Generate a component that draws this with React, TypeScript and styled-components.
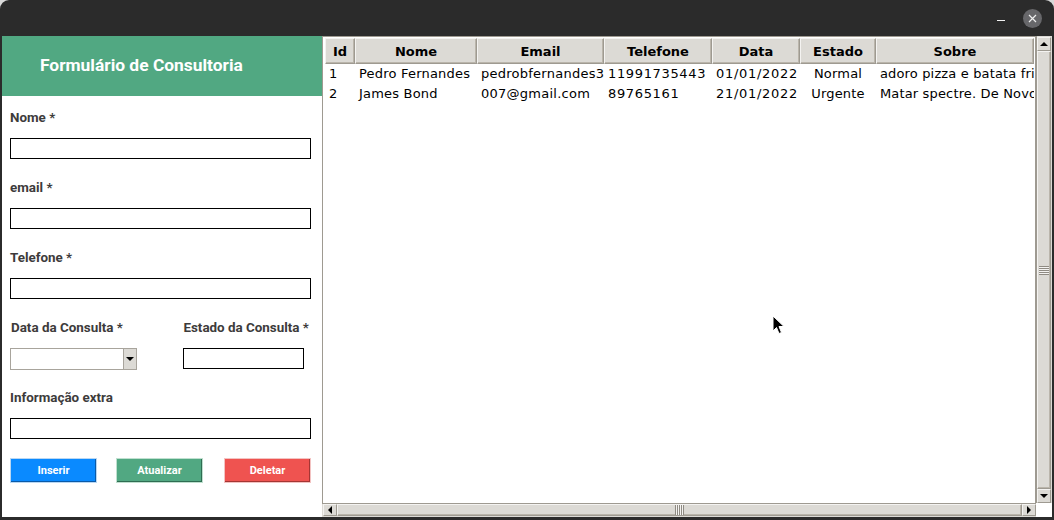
import React from 'react';
import styled, { createGlobalStyle } from 'styled-components';

const Global = createGlobalStyle`
  html, body { margin: 0; padding: 0; background: #d9d9d9; }
  body { width: 1054px; height: 520px; overflow: hidden; }
  * { box-sizing: border-box; }
`;

const Window = styled.div`
  position: relative;
  width: 1054px;
  height: 520px;
  background: #2b2b2b;
  border-radius: 9px 9px 0 0;
  display: flex;
  flex-direction: column;
  overflow: hidden;
`;

const TitleBar = styled.div`
  height: 36px;
  flex: none;
  display: flex;
  align-items: center;
  justify-content: flex-end;
  padding-right: 12px;
  gap: 18px;
`;

const MinBtn = styled.div`
  width: 8px;
  height: 1px;
  background: #f2f2f2;
  margin-top: 4px;
`;

const CloseBtn = styled.div`
  width: 19px;
  height: 19px;
  border-radius: 50%;
  background: #67676a;
  display: flex;
  align-items: center;
  justify-content: center;
`;

const Main = styled.div`
  flex: 1;
  min-height: 0;
  display: flex;
  margin: 0 2px 3px 2px;
`;

const Sidebar = styled.div`
  width: 320px;
  flex: none;
  background: #ffffff;
  display: flex;
  flex-direction: column;
`;

const SideHeader = styled.div`
  height: 60px;
  background: #51a882;
  display: flex;
  align-items: center;
  padding: 0 0 3px 38px;
  color: #ffffff;
  font-family: Roboto, "Liberation Sans", sans-serif;
  font-weight: 700;
  font-size: 17.4px;
`;

const Form = styled.div`
  display: flex;
  flex-direction: column;
  padding: 15px 0 0 6px;
  font-family: Roboto, "Liberation Sans", sans-serif;
`;

const Field = styled.div<{ $mb: number }>`
  display: flex;
  flex-direction: column;
  gap: 13px;
  margin-bottom: ${(p) => p.$mb}px;
`;

const Label = styled.div<{ $indent?: number }>`
  height: 14px;
  line-height: 14px;
  font-size: 13.4px;
  font-weight: 700;
  color: #3d3b3b;
  padding-left: ${(p) => p.$indent ?? 2}px;
  white-space: nowrap;
`;

const TextBox = styled.div<{ $w: number; $h?: number; $ml?: number }>`
  width: ${(p) => p.$w}px;
  height: ${(p) => p.$h ?? 21}px;
  margin-left: ${(p) => p.$ml ?? 2}px;
  border: 1px solid #000000;
  background: #ffffff;
`;

const TwoCols = styled.div`
  display: flex;
  margin-bottom: 21px;
`;

const Col = styled.div<{ $w: number }>`
  width: ${(p) => p.$w}px;
  display: flex;
  flex-direction: column;
  gap: 13px;
`;

const Combo = styled.div`
  width: 127px;
  height: 22px;
  margin-left: 2px;
  border: 1px solid #a8a49c;
  background: #ffffff;
  display: flex;
  justify-content: flex-end;
`;

const ComboArrow = styled.div`
  width: 13px;
  background: #dcdad5;
  border-left: 1px solid #a8a49c;
  display: flex;
  align-items: center;
  justify-content: center;
`;

const ButtonRow = styled.div`
  display: flex;
  padding-left: 2px;
`;

const Button = styled.div<{ $ml: number; $color: string; $light: string; $dark: string }>`
  width: 87px;
  height: 25px;
  margin-left: ${(p) => p.$ml}px;
  background: ${(p) => p.$color};
  border: 1px solid ${(p) => p.$light};
  box-shadow: inset -1px -1px 0 ${(p) => p.$dark};
  color: #ffffff;
  font-size: 11px;
  font-weight: 700;
  display: flex;
  align-items: center;
  justify-content: center;
`;

const TablePane = styled.div`
  flex: 1;
  min-width: 0;
  display: grid;
  grid-template-columns: 1fr 16px;
  grid-template-rows: 1fr 14px;
  background: #ffffff;
`;

const Tree = styled.div`
  border-left: 1px solid #9e9a91;
  border-top: 1px solid #9e9a91;
  border-right: 1px solid #9e9a91;
  padding: 1px 0 0 2px;
  background: #ffffff;
  overflow: hidden;
  font-family: "DejaVu Sans", sans-serif;
  font-size: 13px;
  color: #000000;
`;

const HeadRow = styled.div`
  display: flex;
  height: 26px;
`;

const HeadCell = styled.div<{ $w: number }>`
  width: ${(p) => p.$w}px;
  flex: none;
  background: #dcdad5;
  border: 1px solid #9e9a91;
  border-left-color: #f4f3f1;
  border-top-color: #f4f3f1;
  box-shadow: inset -1px -1px 0 #bab5ab;
  font-weight: 700;
  display: flex;
  align-items: center;
  justify-content: center;
  white-space: nowrap;
  overflow: hidden;
`;

const DataRow = styled.div`
  display: flex;
  height: 20px;
  line-height: 20px;
  &:first-of-type { margin-top: -1px; }
`;

const DataCell = styled.div<{ $w: number; $center?: boolean; $ls: number }>`
  width: ${(p) => p.$w}px;
  flex: none;
  padding-left: ${(p) => (p.$center ? 0 : 4)}px;
  text-align: ${(p) => (p.$center ? 'center' : 'left')};
  letter-spacing: ${(p) => p.$ls}px;
  white-space: nowrap;
  overflow: hidden;
`;

const VScroll = styled.div`
  background: #dcdad5;
  border-left: 1px solid #9e9a91;
  display: flex;
  flex-direction: column;
  padding: 1px 1px 0 0;
`;

const HScroll = styled.div`
  background: #dcdad5;
  border-top: 1px solid #9e9a91;
  display: flex;
  padding: 0 0 1px 1px;
`;

const Corner = styled.div`
  background: #ffffff;
`;

const ArrowBox = styled.div<{ $vertical?: boolean }>`
  flex: none;
  width: ${(p) => (p.$vertical ? '100%' : '14px')};
  height: ${(p) => (p.$vertical ? '14px' : '100%')};
  background: #dcdad5;
  border: 1px solid #9e9a91;
  border-left-color: #f4f3f1;
  border-top-color: #f4f3f1;
  display: flex;
  align-items: center;
  justify-content: center;
`;

const Thumb = styled.div`
  flex: 1;
  background: #dcdad5;
  border: 1px solid #9e9a91;
  border-left-color: #f4f3f1;
  border-top-color: #f4f3f1;
  box-shadow: inset -1px -1px 0 #bab5ab;
  display: flex;
  align-items: center;
  justify-content: center;
`;

const Grip = styled.div<{ $vertical?: boolean }>`
  width: ${(p) => (p.$vertical ? '10px' : '9px')};
  height: ${(p) => (p.$vertical ? '9px' : '10px')};
  background: ${(p) =>
    p.$vertical
      ? 'repeating-linear-gradient(to bottom, #8f8b83 0 1px, #f4f3f1 1px 2px)'
      : 'repeating-linear-gradient(to right, #8f8b83 0 1px, #f4f3f1 1px 2px)'};
`;

const Cursor = styled.svg`
  position: absolute;
  left: 772px;
  top: 315px;
`;

const cols = [
  { name: 'Id', w: 30, ls: 0 },
  { name: 'Nome', w: 122, ls: 0.2 },
  { name: 'Email', w: 127, ls: 0.25 },
  { name: 'Telefone', w: 108, ls: 0.65 },
  { name: 'Data', w: 88, ls: 0.7 },
  { name: 'Estado', w: 76, ls: 0.2, center: true },
  { name: 'Sobre', w: 158, ls: 0.15 },
];

const rows = [
  ['1', 'Pedro Fernandes', 'pedrobfernandes3@gmail.com', '11991735443', '01/01/2022', 'Normal', 'adoro pizza e batata frita'],
  ['2', 'James Bond', '007@gmail.com', '89765161', '21/01/2022', 'Urgente', 'Matar spectre. De Novo'],
];

const Tri = ({ dir }: { dir: 'up' | 'down' | 'left' | 'right' }) => {
  const pts: Record<string, string> = {
    up: '0,5 4,1 8,5',
    down: '0,1 4,5 8,1',
    left: '5,0 1,4 5,8',
    right: '1,0 5,4 1,8',
  };
  const vert = dir === 'up' || dir === 'down';
  return (
    <svg width={vert ? 8 : 6} height={vert ? 6 : 8} viewBox={vert ? '0 0 8 6' : '0 0 6 8'}>
      <polygon points={pts[dir]} fill="#000" />
    </svg>
  );
};

export default function App() {
  return (
    <>
      <Global />
      <Window>
        <TitleBar>
          <MinBtn />
          <CloseBtn>
            <svg width="9" height="9" viewBox="0 0 9 9">
              <path d="M1 1 L8 8 M8 1 L1 8" stroke="#f0f0f0" strokeWidth="1.2" />
            </svg>
          </CloseBtn>
        </TitleBar>
        <Main>
          <Sidebar>
            <SideHeader>Formulário de Consultoria</SideHeader>
            <Form>
              <Field $mb={22}>
                <Label>Nome *</Label>
                <TextBox $w={301} />
              </Field>
              <Field $mb={22}>
                <Label>email *</Label>
                <TextBox $w={301} />
              </Field>
              <Field $mb={22}>
                <Label>Telefone *</Label>
                <TextBox $w={301} />
              </Field>
              <TwoCols>
                <Col $w={175}>
                  <Label $indent={3}>Data da Consulta *</Label>
                  <Combo>
                    <ComboArrow>
                      <Tri dir="down" />
                    </ComboArrow>
                  </Combo>
                </Col>
                <Col $w={140}>
                  <Label $indent={1}>Estado da Consulta *</Label>
                  <TextBox $w={121} $ml={1} />
                </Col>
              </TwoCols>
              <Field $mb={19}>
                <Label>Informação extra</Label>
                <TextBox $w={301} />
              </Field>
              <ButtonRow>
                <Button $ml={0} $color="#0a8aff" $light="#b9d7f3" $dark="#0a5aa8">Inserir</Button>
                <Button $ml={19} $color="#51a882" $light="#bfe0cf" $dark="#2f6d52">Atualizar</Button>
                <Button $ml={21} $color="#ef5350" $light="#f3c3c2" $dark="#a43634">Deletar</Button>
              </ButtonRow>
            </Form>
          </Sidebar>
          <TablePane>
            <Tree>
              <HeadRow>
                {cols.map((c) => (
                  <HeadCell key={c.name} $w={c.w}>{c.name}</HeadCell>
                ))}
              </HeadRow>
              {rows.map((r) => (
                <DataRow key={r[0]}>
                  {r.map((v, i) => (
                    <DataCell key={i} $w={cols[i].w} $center={cols[i].center} $ls={cols[i].ls}>{v}</DataCell>
                  ))}
                </DataRow>
              ))}
            </Tree>
            <VScroll>
              <ArrowBox $vertical><Tri dir="up" /></ArrowBox>
              <Thumb><Grip $vertical /></Thumb>
              <ArrowBox $vertical><Tri dir="down" /></ArrowBox>
            </VScroll>
            <HScroll>
              <ArrowBox><Tri dir="left" /></ArrowBox>
              <Thumb><Grip /></Thumb>
              <ArrowBox><Tri dir="right" /></ArrowBox>
            </HScroll>
            <Corner />
          </TablePane>
        </Main>
        <Cursor width="13" height="20" viewBox="0 0 13 20">
          <path d="M1 1 L1 16 L4.5 12.5 L7 18.5 L9.5 17.5 L7 11.5 L12 11.5 Z" fill="#000" stroke="#fff" strokeWidth="1" />
        </Cursor>
      </Window>
    </>
  );
}
